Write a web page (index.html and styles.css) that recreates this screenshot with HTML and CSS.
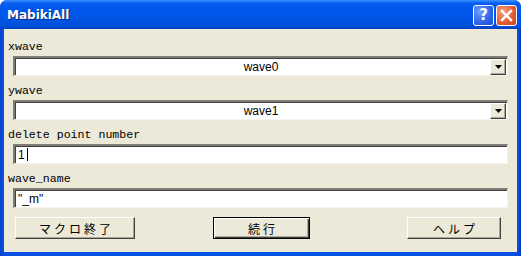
FILE: index.html
```html
<!DOCTYPE html>
<html lang="ja">
<head>
  <meta charset="UTF-8" />
  <title>MabikiAll</title>
  <link rel="stylesheet" href="styles.css">
</head>
<body>
  <div class="window">
    <!-- Title Bar -->
    <div class="titlebar">
      <span class="title">MabikiAll</span>
      <div class="title-buttons">
        <button class="tb-btn help">?</button>
        <button class="tb-btn close">
          <svg width="13" height="13" viewBox="0 0 13 13"><path d="M2 2 L11 11 M11 2 L2 11" stroke="#fff" stroke-width="2.4" stroke-linecap="square"/></svg>
        </button>
      </div>
    </div>

    <!-- Dialog Body -->
    <div class="client">
      <div class="group">
        <div class="label">xwave</div>
        <div class="field select">
          <span class="value">wave0</span>
          <span class="arrow"><svg width="7" height="4" viewBox="0 0 7 4"><path d="M0 0 H7 L3.5 4 Z" fill="#000"/></svg></span>
        </div>
      </div>
      <div class="group">
        <div class="label">ywave</div>
        <div class="field select">
          <span class="value">wave1</span>
          <span class="arrow"><svg width="7" height="4" viewBox="0 0 7 4"><path d="M0 0 H7 L3.5 4 Z" fill="#000"/></svg></span>
        </div>
      </div>
      <div class="group">
        <div class="label">delete point number</div>
        <div class="field text">1<span class="caret"></span></div>
      </div>
      <div class="group">
        <div class="label">wave_name</div>
        <div class="field text">"_m"</div>
      </div>

      <!-- Action Buttons -->
      <div class="actions">
        <button class="btn quit">マクロ終了</button>
        <button class="btn go default">続行</button>
        <button class="btn help-btn">ヘルプ</button>
      </div>
    </div>
  </div>
</body>
</html>
```

FILE: styles.css
```css
/* Reset */
* {
  margin: 0;
  padding: 0;
  box-sizing: border-box;
}
body {
  background: #fff;
  width: 521px;
  height: 256px;
  overflow: hidden;
}

/* Window Frame */
.window {
  width: 521px;
  height: 256px;
  background: linear-gradient(to right, #0842c8, #0a4fe0 3px, #0054e3 50%, #0a4fe0 calc(100% - 3px), #0536b8);
  border-radius: 7px 7px 0 0;
  display: flex;
  flex-direction: column;
}

/* Title Bar */
.titlebar {
  height: 29px;
  display: flex;
  align-items: center;
  justify-content: space-between;
  padding: 0 4px 0 7px;
  border-radius: 7px 7px 0 0;
  background: linear-gradient(to bottom, #3d95ff 0, #0a5ff0 3px, #0058ee 8px, #0055e5 18px, #0050dd 26px, #003dc0 29px);
}
.title {
  font-family: "DejaVu Sans", sans-serif;
  font-weight: bold;
  font-size: 12px;
  color: #fff;
  text-shadow: 1px 1px 0 #0a2a80;
  margin-top: 1px;
}
.title-buttons {
  display: flex;
  gap: 2px;
  margin-top: 1px;
}
.tb-btn {
  width: 21px;
  height: 21px;
  border: 1px solid #fff;
  border-radius: 3px;
  display: flex;
  align-items: center;
  justify-content: center;
  color: #fff;
  font-family: "DejaVu Sans", sans-serif;
  font-weight: bold;
  font-size: 15px;
}
.tb-btn.help {
  background: radial-gradient(circle at 30% 30%, #6fa0ff, #2a63e8 60%, #1c4fd0);
}
.tb-btn.close {
  background: radial-gradient(circle at 30% 30%, #f7a080, #e35a30 60%, #c8401c);
}

/* Client Area */
.client {
  flex: 1;
  margin: 0 4px 4px 4px;
  background: #ece9d8;
  padding: 11px 0 0 4px;
}
.group {
  height: 44px;
}
.label {
  font-family: "Liberation Mono", monospace;
  font-size: 11.6px;
  height: 16px;
  line-height: 14px;
  color: #000;
}

/* Fields */
.field {
  margin-left: 5px;
  width: 495px;
  height: 20px;
  background: #fff;
  border-style: solid;
  border-width: 2px 1px 1px 2px;
  border-color: #7f7d75 #f4f3ee #f4f3ee #7f7d75;
  box-shadow: inset 1px 1px 0 #404040;
  font-family: "Liberation Sans", sans-serif;
  font-size: 12px;
  color: #000;
  display: flex;
  align-items: center;
}
.select {
  padding-left: 17px;
}
.select .value {
  flex: 1;
  text-align: center;
}
.arrow {
  width: 16px;
  height: 16px;
  margin-right: 1px;
  background: #ece9d8;
  border-style: solid;
  border-width: 1px;
  border-color: #fff #404040 #404040 #fff;
  box-shadow: inset -1px -1px 0 #aca899;
  display: flex;
  align-items: center;
  justify-content: center;
}
.text {
  padding-left: 3px;
}
.caret {
  display: inline-block;
  width: 1px;
  height: 13px;
  background: #000;
  margin-left: 2px;
}

/* Action Buttons */
.actions {
  display: flex;
  margin: 1px 0 0 7px;
}
.btn {
  height: 22px;
  background: #ece9d8;
  border-style: solid;
  border-width: 1px;
  border-color: #fff #404040 #404040 #fff;
  box-shadow: inset -1px -1px 0 #aca899;
  font-family: "Noto Sans CJK JP", sans-serif;
  font-size: 12px;
  letter-spacing: 3px;
  text-indent: 3px;
  color: #000;
}
.quit {
  width: 120px;
}
.go {
  width: 97px;
  margin: 0 97px 0 78px;
}
.go.default {
  border: 1px solid #000;
  box-shadow: inset 1px 1px 0 #fff, inset -1px -1px 0 #404040, inset -2px -2px 0 #aca899;
}
.help-btn {
  width: 94px;
}
```
